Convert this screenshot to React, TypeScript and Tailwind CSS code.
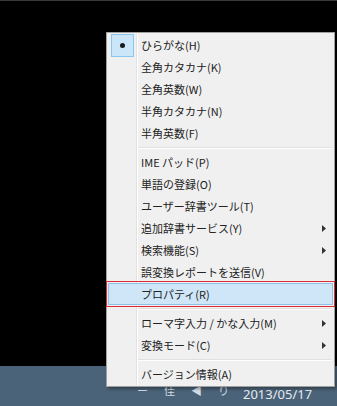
import React from "react";

type Item = { label: string; sub?: boolean; checked?: boolean; hot?: boolean } | "sep";

var ITEMS: Item[] = [
  { label: "ひらがな(H)", checked: true },
  { label: "全角カタカナ(K)" },
  { label: "全角英数(W)" },
  { label: "半角カタカナ(N)" },
  { label: "半角英数(F)" },
  "sep",
  { label: "IME パッド(P)" },
  { label: "単語の登録(O)" },
  { label: "ユーザー辞書ツール(T)" },
  { label: "追加辞書サービス(Y)", sub: true },
  { label: "検索機能(S)", sub: true },
  { label: "誤変換レポートを送信(V)" },
  { label: "プロパティ(R)", hot: true },
  "sep",
  { label: "ローマ字入力 / かな入力(M)", sub: true },
  { label: "変換モード(C)", sub: true },
  "sep",
  { label: "バージョン情報(A)" },
];

function Row({ item }: { item: Exclude<Item, "sep"> }) {
  return (
    <div className={"relative flex h-[22px] items-center " +
      (item.hot ? "border border-[#8fc0ea] bg-[#cfe5f8]" : "border border-transparent")}>
      <div className="flex w-[27px] items-center justify-center">
        {item.checked && (
          <div className="flex h-[23px] w-[23px] items-center justify-center border border-[#8cc6ee] bg-[#cbe6f9]">
            <span className="h-[5px] w-[5px] rounded-full bg-[#1a1a1a]" />
          </div>
        )}
      </div>
      <span className="pl-[5px] text-[11px] text-[#222]">{item.label}</span>
      {item.sub && (
        <svg className="absolute right-[6px] top-[7px]" width="4" height="7" viewBox="0 0 4 7">
          <path d="M0 0 L4 3.5 L0 7 Z" fill="#333" />
        </svg>
      )}
      {/* red annotation frame */}
      {item.hot && <div className="absolute -inset-[3px] border-[1.5px] border-[#dd2c34]" />}
    </div>
  );
}

export default function App() {
  return (
    <div className="relative flex h-[406px] w-[337px] flex-col overflow-hidden bg-black"
      style={{ fontFamily: "'Noto Sans CJK JP', 'Noto Sans', sans-serif" }}>
      <div className="h-px bg-[#3a3a3a]" />
      <div className="flex-1" />
      {/* taskbar */}
      <div className="relative h-[40px] bg-[#4b6378]">
        <div className="absolute left-[137px] top-[19px] flex gap-[16px] text-[11px] leading-none text-[#d4dde5]">
          <span>ー</span><span>佳</span><span>◀</span><span>り</span>
        </div>
        <div className="absolute left-[243px] top-[22px] text-[13px] leading-none text-[#e6ecf2]"
          style={{ fontFamily: "'Noto Sans', sans-serif" }}>2013/05/17</div>
      </div>

      {/* IME context menu */}
      <div className="absolute left-[106px] top-[32px] w-[229px] border border-[#a0a0a0] bg-[#f0f0f0] px-[1px] py-[1px] shadow-[2px_2px_3px_rgba(0,0,0,0.35)]">
        <div className="absolute bottom-[1px] left-[29px] top-[1px] w-px bg-[#e2e2e2]" />
        <div className="absolute bottom-[1px] left-[30px] top-[1px] w-px bg-white" />
        {ITEMS.map(function (it, i) {
          if (it === "sep") {
            return (
              <div key={i} className="ml-[29px] mr-[2px] flex h-[7px] flex-col justify-center">
                <div className="h-px bg-[#e0e0e0]" />
                <div className="h-px bg-white" />
              </div>
            );
          }
          return <Row key={i} item={it} />;
        })}
      </div>
    </div>
  );
}
